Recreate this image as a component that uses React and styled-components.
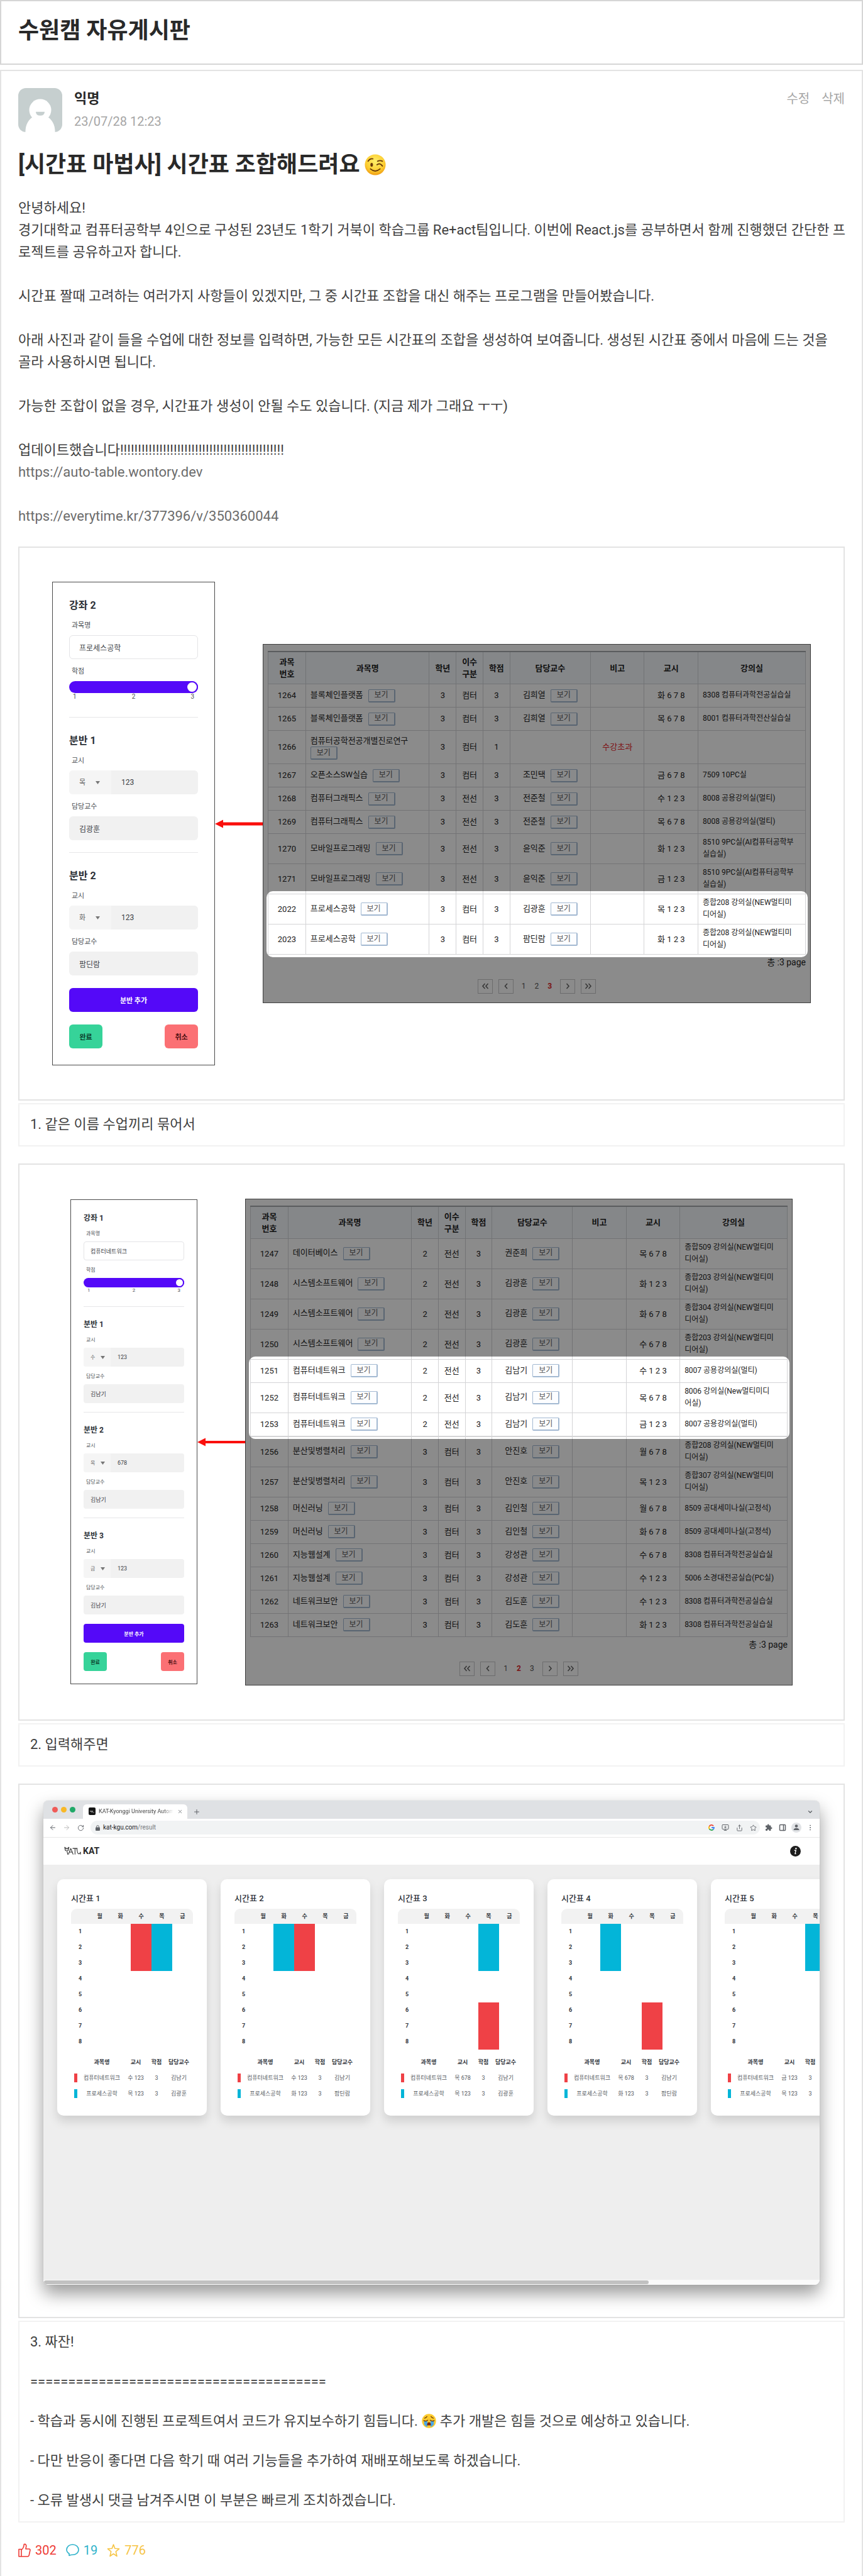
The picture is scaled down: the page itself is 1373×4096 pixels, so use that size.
import React, { useId } from "react";
import styled, { createGlobalStyle, css } from "styled-components";
import {
  ArrowLeft,
  ArrowRight,
  ChevronDown,
  MonitorDown,
  PanelRight,
  Plus,
  RotateCw,
  Share,
  Star,
  X,
  EllipsisVertical,
} from "lucide-react";

const GlobalStyle = createGlobalStyle`
  *, *::before, *::after { box-sizing: border-box; }
  body {
    margin: 0;
    background: #fff;
    color: #292929;
    font-family: Roboto, "Noto Sans CJK KR", sans-serif;
  }
  h1, h2, h3, p, ul { margin: 0; padding: 0; }
  button, input, select { font-family: inherit; }
`;

/* ---------- page ---------- */

const BoardHeader = styled.header`
  border: 2px solid #d6d6d6;
  margin-bottom: 8px;
  padding: 22px 27px 27px;
`;

const BoardTitle = styled.h1`
  font-size: 36px;
  line-height: 50px;
  font-weight: 700;
`;

const Post = styled.article`
  border: 2px solid #e3e3e3;
  border-bottom: 0;
  padding: 26px 27px 25px;
`;

const PostHead = styled.div`
  display: flex;
  align-items: center;
  gap: 19px;
`;

const Byline = styled.div`
  flex: 1;
`;

const Author = styled.h3`
  font-size: 22px;
  line-height: 36px;
  font-weight: 700;
`;

const PostedAt = styled.time`
  display: block;
  font-size: 20px;
  line-height: 36px;
  color: #a6a6a6;
`;

const Actions = styled.div`
  display: flex;
  gap: 19px;
  align-self: flex-start;
`;

const ActionButton = styled.button`
  border: 0;
  padding: 0;
  background: none;
  color: #a6a6a6;
  font-size: 20px;
  line-height: 36px;
`;

const PostTitle = styled.h2`
  display: flex;
  align-items: center;
  gap: 7px;
  margin: 26px 0 26px;
  font-size: 36px;
  line-height: 50px;
  font-weight: 700;
`;

const Body = styled.div`
  margin-right: -8px;
  font-size: 22px;
  line-height: 35px;
  color: #404040;
`;

const Paragraph = styled.p`
  margin-bottom: ${(p) => (p.$last ? 31 : 35)}px;
`;

const BodyLink = styled.a`
  color: #6c6c6c;
  text-decoration: none;
`;

const Figure = styled.figure`
  margin: 0 0 27px;
`;

const Frame = styled.div`
  display: flex;
  align-items: center;
  border: 2px solid #e3e3e3;
  padding: ${(p) => p.$pad};
`;

const Caption = styled.figcaption`
  display: flex;
  flex-direction: column;
  gap: 28px;
  margin-top: 4px;
  border: 2px solid #f2f2f2;
  padding: 14px 17px 16px;
  font-size: 22px;
  line-height: 35px;
  color: #404040;
`;

const CaptionLine = styled.p`
  display: flex;
  align-items: center;
  gap: 6px;
`;

const Stats = styled.ul`
  display: flex;
  gap: 15px;
  list-style: none;
`;

const Stat = styled.li`
  display: flex;
  align-items: center;
  gap: 7px;
  font-size: 20px;
  line-height: 35px;
  color: ${(p) => p.$color};
`;

/* ---------- course form ---------- */

const large = {
  width: 259, padX: 26, padTop: 27, padBottom: 26,
  title: 16, titleLine: 20, titleGap: 2,
  label: 11, labelLine: 16, labelTop: 12, labelBottom: 7,
  field: 38, text: 12, textPad: 16, radius: 6, day: 67,
  slider: 19, tick: 10, tickLine: 12,
  ruleTop: 26, ruleBlock: 19, ruleBottom: 27, gap: 20, action: 53, button: 11,
};

const small = {
  width: 202, padX: 20, padTop: 21, padBottom: 20,
  title: 12, titleLine: 16, titleGap: 1,
  label: 8, labelLine: 12, labelTop: 10, labelBottom: 6,
  field: 30, text: 9, textPad: 11, radius: 4, day: 43,
  slider: 15, tick: 8, tickLine: 10,
  ruleTop: 20, ruleBlock: 14, ruleBottom: 20, gap: 15, action: 37, button: 8,
};

const FormPanel = styled.form`
  flex: 0 0 ${(p) => p.$s.width}px;
  border: 1px solid #4a4a4a;
  padding: ${(p) => p.$s.padTop}px ${(p) => p.$s.padX}px ${(p) => p.$s.padBottom}px;
  color: #2b3037;
`;

const FormTitle = styled.h3`
  margin-bottom: ${(p) => p.$s.titleGap}px;
  font-size: ${(p) => p.$s.title}px;
  line-height: ${(p) => p.$s.titleLine}px;
  font-weight: 700;
`;

const Label = styled.label`
  display: block;
  padding: ${(p) => p.$s.labelTop}px 4px ${(p) => p.$s.labelBottom}px;
  font-size: ${(p) => p.$s.label}px;
  line-height: ${(p) => p.$s.labelLine}px;
  color: #4b4f55;
`;

const fieldStyle = css`
  display: block;
  width: 100%;
  min-width: 0;
  height: ${(p) => p.$s.field}px;
  border: 0;
  border-radius: ${(p) => p.$s.radius}px;
  padding: 0 ${(p) => p.$s.textPad}px;
  background: #f1f1f1;
  color: #3c4046;
  font-size: ${(p) => p.$s.text}px;
`;

const TextField = styled.input`
  ${fieldStyle}
  ${(p) => p.$outlined && css`
    border: 1px solid #e4e4e6;
    background: #fff;
    padding: 0 ${p.$s.textPad - 1}px;
  `}
`;

const FieldGroup = styled.div`
  display: flex;
  border-radius: ${(p) => p.$s.radius}px;
  overflow: hidden;
  background: #f1f1f1;
`;

const DayBox = styled.div`
  display: flex;
  align-items: center;
  flex: 0 0 ${(p) => p.$s.day}px;
  padding-left: ${(p) => p.$s.textPad}px;
  background: #f5f5f5;
  color: #777;
`;

const DaySelect = styled.select`
  appearance: none;
  width: 50%;
  border: 0;
  padding: 0;
  background: transparent;
  color: #666;
  font-size: ${(p) => p.$s.label}px;
`;

const Slider = styled.input`
  appearance: none;
  display: block;
  width: 100%;
  height: ${(p) => p.$s.slider}px;
  margin: 0;
  border-radius: 10px;
  background: #5409f8;

  &::-webkit-slider-thumb {
    appearance: none;
    width: ${(p) => p.$s.slider}px;
    height: ${(p) => p.$s.slider}px;
    border: 2px solid #5409f8;
    border-radius: 50%;
    background: #fff;
  }
`;

const Ticks = styled.div`
  display: flex;
  justify-content: space-between;
  padding: 0 6px;
  font-size: ${(p) => p.$s.tick}px;
  line-height: ${(p) => p.$s.tickLine}px;
  color: #4b4f55;
`;

const Rule = styled.hr`
  height: 1px;
  margin: ${(p) => (p.$afterBlock ? p.$s.ruleBlock : p.$s.ruleTop)}px 0 ${(p) => p.$s.ruleBottom}px;
  border: 0;
  background: #e6e6e8;
`;

const FormButton = styled.button`
  width: ${(p) => (p.$wide ? "100%" : `${p.$s.action}px`)};
  height: ${(p) => p.$s.field}px;
  border: 0;
  border-radius: ${(p) => p.$s.radius}px;
  padding: 0;
  background: ${(p) => p.$bg};
  color: ${(p) => p.$color};
  font-size: ${(p) => p.$s.button}px;
  font-weight: 700;
`;

const ButtonArea = styled.div`
  display: flex;
  flex-wrap: wrap;
  justify-content: space-between;
  gap: ${(p) => p.$s.gap}px 0;
  margin-top: ${(p) => p.$s.gap}px;
`;

function CourseForm({ size, number, course, sections }) {
  const id = useId();
  return (
    <FormPanel $s={size} onSubmit={(e) => e.preventDefault()}>
      <FormTitle $s={size}>강좌 {number}</FormTitle>
      <Label $s={size} htmlFor={`${id}c`}>과목명</Label>
      <TextField $s={size} $outlined id={`${id}c`} defaultValue={course} />
      <Label $s={size} htmlFor={`${id}r`}>학점</Label>
      <Slider $s={size} id={`${id}r`} type="range" min="1" max="3" defaultValue="3" />
      <Ticks $s={size}><span>1</span><span>2</span><span>3</span></Ticks>
      {sections.map(([day, time, professor], i) => (
        <React.Fragment key={i}>
          <Rule $s={size} $afterBlock={i > 0} />
          <FormTitle $s={size}>분반 {i + 1}</FormTitle>
          <Label $s={size} htmlFor={`${id}t${i}`}>교시</Label>
          <FieldGroup $s={size}>
            <DayBox $s={size}>
              <DaySelect $s={size} aria-label="요일" defaultValue={day}>
                {["월", "화", "수", "목", "금"].map((d) => <option key={d}>{d}</option>)}
              </DaySelect>
              <svg width="7" height="5" viewBox="0 0 7 5"><path d="M0 0h7L3.500 5z" fill="currentColor" /></svg>
            </DayBox>
            <TextField $s={size} id={`${id}t${i}`} defaultValue={time} />
          </FieldGroup>
          <Label $s={size} htmlFor={`${id}p${i}`}>담당교수</Label>
          <TextField $s={size} id={`${id}p${i}`} defaultValue={professor} />
        </React.Fragment>
      ))}
      <ButtonArea $s={size}>
        <FormButton $s={size} $wide $bg="#5409f8" $color="#fff" type="button">분반 추가</FormButton>
        <FormButton $s={size} $bg="#36d399" $color="#0b3b29" type="submit">완료</FormButton>
        <FormButton $s={size} $bg="#fb7074" $color="#4a0f12" type="button">취소</FormButton>
      </ButtonArea>
    </FormPanel>
  );
}

/* ---------- arrow ---------- */

const ArrowSvg = styled.svg`
  flex: 0 0 76px;
  display: block;
`;

function RedArrow({ thickness }) {
  return (
    <ArrowSvg width="76" height="14" viewBox="0 0 76 14" aria-hidden="true">
      <path d={`M10 7H76`} stroke="#fa0f0c" strokeWidth={thickness} />
      <path d="M0 7L13 0.500V13.500Z" fill="#fa0f0c" />
    </ArrowSvg>
  );
}

/* ---------- lecture table ---------- */

const ListPanel = styled.div`
  flex: 1;
  min-width: 0;
  overflow: hidden;
  border: 1px solid #3d3d3d;
  padding: 10px 7px 14px;
  background: #fff;
  color: #222;
`;

const LectureTable = styled.table`
  width: 100%;
  table-layout: fixed;
  border-collapse: collapse;
  border-top: 2px solid #a5a9ad;
  font-size: 13px;
  line-height: 19px;
`;

const Head = styled.th`
  width: ${(p) => p.$w}%;
  height: 51px;
  border: 1px solid #d0d3d6;
  padding: 0;
  background: #f4f7fb;
  font-weight: 700;
`;

const Cell = styled.td`
  height: ${(p) => p.$h}px;
  border: 1px solid #d4d4d6;
  padding: 0;
  text-align: ${(p) => (p.$left ? "left" : "center")};
  ${(p) => p.$left && css`padding-left: 7px;`}
  ${(p) => p.$compact && css`font-size: 12px;`}
  ${(p) => p.$alert && css`color: #e8262b;`}
`;

const Rows = styled.tbody`
  ${(p) => p.$spotlight && css`
    position: relative;

    &::after {
      content: "";
      position: absolute;
      inset: -4px -3px;
      border-radius: 10px;
      box-shadow: 0 0 0 1000px rgba(0, 0, 0, 0.455);
      pointer-events: none;
    }
  `}
`;

const ViewButton = styled.button`
  width: 43px;
  height: 21px;
  margin-left: ${(p) => (p.$flush ? 0 : 8)}px;
  border: 1px solid #a3b9d2;
  border-width: 1px 2px 2px 1px;
  border-radius: 2px;
  padding: 0;
  background: #fcfdff;
  color: #555;
  font-size: 12px;
  line-height: 17px;
`;

const Total = styled.p`
  margin-top: 2px;
  text-align: right;
  font-size: 14px;
  line-height: 20px;
`;

const Pager = styled.nav`
  display: flex;
  justify-content: center;
  align-items: center;
  gap: 9px;
  margin-top: 17px;
`;

const PageNumbers = styled.div`
  display: flex;
  gap: 14px;
  padding: 0 4px;
`;

const PageLink = styled.a`
  color: ${(p) => (p.$current ? "#e0262b" : "#555")};
  font-size: 12px;
  line-height: 23px;
  font-weight: ${(p) => (p.$current ? 700 : 400)};
  text-decoration: none;
`;

const PageButton = styled.button`
  width: 24px;
  height: 23px;
  border: 1px solid #c6c6c8;
  padding: 0;
  background: transparent;
  color: #666;
  display: grid;
  place-items: center;
`;

const columns = [
  ["과목\n번호", 7], ["과목명", 23], ["학년", 5], ["이수\n구분", 5], ["학점", 5],
  ["담당교수", 15], ["비고", 10], ["교시", 10], ["강의실", 20],
];

const PreLine = styled.span`
  white-space: pre-line;
`;

function PageIcon({ d }) {
  return (
    <svg width="12" height="10" viewBox="0 0 12 10" fill="none" stroke="currentColor" strokeWidth="1.600">
      <path d={d} />
    </svg>
  );
}

function LectureRow({ row }) {
  const [code, name, year, kind, credit, professor, note, time, room] = row;
  const longName = name.length > 11;
  const h = longName ? 53 : room.includes("\n") ? 48 : 37;
  return (
    <tr>
      <Cell $h={h}>{code}</Cell>
      <Cell $left>
        {name}
        {longName && <br />}
        <ViewButton $flush={longName} type="button">보기</ViewButton>
      </Cell>
      <Cell>{year}</Cell>
      <Cell>{kind}</Cell>
      <Cell>{credit}</Cell>
      <Cell>{professor && <>{professor}<ViewButton type="button">보기</ViewButton></>}</Cell>
      <Cell $alert>{note}</Cell>
      <Cell>{time}</Cell>
      <Cell $left $compact><PreLine>{room}</PreLine></Cell>
    </tr>
  );
}

function LectureList({ before, picked, after = [], page }) {
  return (
    <ListPanel>
      <LectureTable>
        <thead>
          <tr>{columns.map(([t, w]) => <Head key={t} $w={w}><PreLine>{t}</PreLine></Head>)}</tr>
        </thead>
        <Rows>{before.map((r) => <LectureRow key={r[0]} row={r} />)}</Rows>
        <Rows $spotlight>{picked.map((r) => <LectureRow key={r[0]} row={r} />)}</Rows>
        <Rows>{after.map((r) => <LectureRow key={r[0]} row={r} />)}</Rows>
      </LectureTable>
      <Total>총 :3 page</Total>
      <Pager aria-label="페이지">
        <PageButton type="button" aria-label="처음"><PageIcon d="M5.500 1L2 5l3.500 4M10.500 1L7 5l3.500 4" /></PageButton>
        <PageButton type="button" aria-label="이전"><PageIcon d="M8 1L4.500 5L8 9" /></PageButton>
        <PageNumbers>
          {[1, 2, 3].map((n) => <PageLink key={n} href="#" $current={n === page}>{n}</PageLink>)}
        </PageNumbers>
        <PageButton type="button" aria-label="다음"><PageIcon d="M4.500 1L8 5l-3.500 4" /></PageButton>
        <PageButton type="button" aria-label="마지막"><PageIcon d="M1.500 1L5 5l-3.500 4M6.500 1L10 5l-3.500 4" /></PageButton>
      </Pager>
    </ListPanel>
  );
}

const multi = (n) => `종합${n} 강의실(NEW멀티미\n디어실)`;

const listOne = {
  before: [
    ["1264", "블록체인플랫폼", 3, "컴터", 3, "김희열", "", "화 6 7 8", "8308 컴퓨터과학전공실습실"],
    ["1265", "블록체인플랫폼", 3, "컴터", 3, "김희열", "", "목 6 7 8", "8001 컴퓨터과학전산실습실"],
    ["1266", "컴퓨터공학전공개별진로연구", 3, "컴터", 1, "", "수강초과", "", ""],
    ["1267", "오픈소스SW실습", 3, "컴터", 3, "조민택", "", "금 6 7 8", "7509 10PC실"],
    ["1268", "컴퓨터그래픽스", 3, "전선", 3, "전준철", "", "수 1 2 3", "8008 공용강의실(멀티)"],
    ["1269", "컴퓨터그래픽스", 3, "전선", 3, "전준철", "", "목 6 7 8", "8008 공용강의실(멀티)"],
    ["1270", "모바일프로그래밍", 3, "전선", 3, "윤익준", "", "화 1 2 3", "8510 9PC실(AI컴퓨터공학부\n실습실)"],
    ["1271", "모바일프로그래밍", 3, "전선", 3, "윤익준", "", "금 1 2 3", "8510 9PC실(AI컴퓨터공학부\n실습실)"],
  ],
  picked: [
    ["2022", "프로세스공학", 3, "컴터", 3, "김광훈", "", "목 1 2 3", multi(208)],
    ["2023", "프로세스공학", 3, "컴터", 3, "팜딘람", "", "화 1 2 3", multi(208)],
  ],
};

const listTwo = {
  before: [
    ["1247", "데이터베이스", 2, "전선", 3, "권준희", "", "목 6 7 8", multi(509)],
    ["1248", "시스템소프트웨어", 2, "전선", 3, "김광훈", "", "화 1 2 3", multi(203)],
    ["1249", "시스템소프트웨어", 2, "전선", 3, "김광훈", "", "화 6 7 8", multi(304)],
    ["1250", "시스템소프트웨어", 2, "전선", 3, "김광훈", "", "수 6 7 8", multi(203)],
  ],
  picked: [
    ["1251", "컴퓨터네트워크", 2, "전선", 3, "김남기", "", "수 1 2 3", "8007 공용강의실(멀티)"],
    ["1252", "컴퓨터네트워크", 2, "전선", 3, "김남기", "", "목 6 7 8", "8006 강의실(New멀티미디\n어실)"],
    ["1253", "컴퓨터네트워크", 2, "전선", 3, "김남기", "", "금 1 2 3", "8007 공용강의실(멀티)"],
  ],
  after: [
    ["1256", "분산및병렬처리", 3, "컴터", 3, "안진호", "", "월 6 7 8", multi(208)],
    ["1257", "분산및병렬처리", 3, "컴터", 3, "안진호", "", "목 1 2 3", multi(307)],
    ["1258", "머신러닝", 3, "컴터", 3, "김인철", "", "월 6 7 8", "8509 공대세미나실(고정석)"],
    ["1259", "머신러닝", 3, "컴터", 3, "김인철", "", "화 6 7 8", "8509 공대세미나실(고정석)"],
    ["1260", "지능웹설계", 3, "컴터", 3, "강성관", "", "수 6 7 8", "8308 컴퓨터과학전공실습실"],
    ["1261", "지능웹설계", 3, "컴터", 3, "강성관", "", "수 1 2 3", "5006 소경대전공실습(PC실)"],
    ["1262", "네트워크보안", 3, "컴터", 3, "김도훈", "", "수 1 2 3", "8308 컴퓨터과학전공실습실"],
    ["1263", "네트워크보안", 3, "컴터", 3, "김도훈", "", "화 1 2 3", "8308 컴퓨터과학전공실습실"],
  ],
};

/* ---------- browser window ---------- */

const BrowserWindow = styled.div`
  flex: 1;
  min-width: 0;
  overflow: hidden;
  border-radius: 8px;
  background: #fff;
  box-shadow: 0 0 1px rgba(0, 0, 0, 0.3), 0 14px 28px rgba(0, 0, 0, 0.4);
`;

const TabStrip = styled.div`
  display: flex;
  align-items: flex-end;
  height: 29px;
  padding: 0 10px 0 14px;
  background: #dfe1e4;
  color: #444;
`;

const Lights = styled.div`
  display: flex;
  align-items: center;
  gap: 5px;
  height: 29px;
  width: 49px;
`;

const Light = styled.span`
  width: 9px;
  height: 9px;
  border-radius: 50%;
  background: ${(p) => p.$color};
`;

const Tab = styled.div`
  display: flex;
  align-items: center;
  gap: 5px;
  width: 166px;
  height: 23px;
  margin-right: 9px;
  border-radius: 6px 6px 0 0;
  padding: 0 7px 0 9px;
  background: #fff;
`;

const TabTitle = styled.span`
  flex: 1;
  overflow: hidden;
  white-space: nowrap;
  font-size: 9px;
  line-height: 12px;
  mask-image: linear-gradient(90deg, #000 85%, transparent);
`;

const IconButton = styled.button`
  display: grid;
  place-items: center;
  width: ${(p) => p.$w || 22}px;
  height: 22px;
  flex: none;
  border: 0;
  padding: 0;
  background: none;
  color: ${(p) => p.$color || "#5f6368"};
`;

const StripSpacer = styled.div`
  flex: 1;
`;

const Toolbar = styled.div`
  display: flex;
  align-items: center;
  height: 30px;
  padding: 0 4px;
  border-bottom: 1px solid #e8e8e8;
`;

const AddressBar = styled.div`
  display: flex;
  align-items: center;
  flex: 1;
  height: 22px;
  margin: 0 3px 0 5px;
  border-radius: 11px;
  padding-left: 8px;
  background: #f1f3f4;
`;

const Address = styled.span`
  flex: 1;
  padding-left: 5px;
  font-size: 10px;
  line-height: 14px;
  color: #202124;
`;

const AddressPath = styled.span`
  color: #777b80;
`;

const SiteHeader = styled.div`
  display: flex;
  align-items: center;
  justify-content: space-between;
  height: 43px;
  padding: 0 30px 0 33px;
`;

const Brand = styled.a`
  display: flex;
  align-items: center;
  gap: 3px;
  color: #2a2a2a;
  font-size: 14px;
  line-height: 20px;
  font-weight: 700;
  text-decoration: none;
`;

const Cards = styled.div`
  display: flex;
  gap: 22px;
  overflow: hidden;
  padding: 23px 22px 261px;
  background: #eee;
`;

const Card = styled.section`
  flex: 0 0 238px;
  border-radius: 10px;
  padding: 22px;
  background: #fff;
  box-shadow: 0 9px 16px rgba(0, 0, 0, 0.13);
`;

const CardTitle = styled.h3`
  margin-bottom: 7px;
  color: #2b3037;
  font-size: 13px;
  line-height: 18px;
  font-weight: 500;
`;

const Grid = styled.table`
  width: 100%;
  table-layout: fixed;
  border-collapse: separate;
  border-spacing: 0;
  margin-bottom: ${(p) => p.$gap || 0}px;
  color: #33373d;
  font-size: 9px;
  line-height: 12px;
  text-align: center;
`;

const DayHead = styled.th`
  width: ${(p) => (p.$first ? 15 : 17)}%;
  height: 24px;
  padding: 0;
  background: #f2f2f2;
  font-weight: 700;

  &:first-child { border-top-left-radius: 9px; }
  &:last-child { border-top-right-radius: 9px; }
`;

const HourHead = styled.th`
  height: 25px;
  padding: 0;
  font-weight: 700;
`;

const Slot = styled.td`
  padding: 0;
  background: ${(p) => p.$color || "transparent"};
`;

const InfoHead = styled.th`
  width: ${(p) => p.$w}px;
  height: 25px;
  padding: 0;
  white-space: nowrap;
  font-weight: 700;
`;

const InfoCell = styled.td`
  height: 25px;
  padding: 0;
  white-space: nowrap;
  color: #54585e;
`;

const Swatch = styled.span`
  display: block;
  width: 5px;
  height: 14px;
  margin-left: 5px;
  background: ${(p) => p.$color};
`;

const ScrollTrack = styled.div`
  height: 8px;
  padding: 1px;
  background: #fafafa;
`;

const ScrollThumb = styled.div`
  width: 78%;
  height: 6px;
  border-radius: 3px;
  background: #c1c1c1;
`;

const RED = "#ef4146";
const BLUE = "#03b5d8";
const DAYS = ["월", "화", "수", "목", "금"];

const timetables = [
  [["수", 1], ["목", 1], "김광훈"],
  [["수", 1], ["화", 1], "팜딘람"],
  [["목", 6], ["목", 1], "김광훈"],
  [["목", 6], ["화", 1], "팜딘람"],
  [["금", 1], ["목", 1], "김광훈"],
];

function Timetable({ number, data }) {
  const [network, process, professor] = data;
  const colorAt = (day, hour) => {
    const hit = ([d, start]) => d === day && hour >= start && hour < start + 3;
    if (hit(network)) return RED;
    if (hit(process)) return BLUE;
    return undefined;
  };
  const span = ([d, start]) => `${d} ${start}${start + 1}${start + 2}`;
  return (
    <Card>
      <CardTitle>시간표 {number}</CardTitle>
      <Grid $gap={8}>
        <thead>
          <tr>
            <DayHead $first aria-label="교시" />
            {DAYS.map((d) => <DayHead key={d}>{d}</DayHead>)}
          </tr>
        </thead>
        <tbody>
          {[1, 2, 3, 4, 5, 6, 7, 8].map((h) => (
            <tr key={h}>
              <HourHead>{h}</HourHead>
              {DAYS.map((d) => <Slot key={d} $color={colorAt(d, h)} />)}
            </tr>
          ))}
        </tbody>
      </Grid>
      <Grid>
        <thead>
          <tr>
            <InfoHead $w={15} aria-label="색" />
            <InfoHead $w={68}>과목명</InfoHead>
            <InfoHead $w={40}>교시</InfoHead>
            <InfoHead $w={26}>학점</InfoHead>
            <InfoHead $w={45}>담당교수</InfoHead>
          </tr>
        </thead>
        <tbody>
          <tr>
            <InfoCell><Swatch $color={RED} /></InfoCell>
            <InfoCell>컴퓨터네트워크</InfoCell>
            <InfoCell>{span(network)}</InfoCell>
            <InfoCell>3</InfoCell>
            <InfoCell>김남기</InfoCell>
          </tr>
          <tr>
            <InfoCell><Swatch $color={BLUE} /></InfoCell>
            <InfoCell>프로세스공학</InfoCell>
            <InfoCell>{span(process)}</InfoCell>
            <InfoCell>3</InfoCell>
            <InfoCell>{professor}</InfoCell>
          </tr>
        </tbody>
      </Grid>
    </Card>
  );
}

function CatDoodle(props) {
  return (
    <svg viewBox="0 0 28 14" fill="none" stroke="currentColor" strokeWidth="1.100" strokeLinejoin="round" {...props}>
      <path d="M1 1l1 5q2 2 5 0L8 1 6 3H3zM3 4.500h.6M5.500 4.500h.6M5 8l1 5" />
      <path d="M7 13L11 3l4 10M9 9h5M14 3h8M18 3v10M21 3q1 9 3 9t3-3v4" />
    </svg>
  );
}

function Browser() {
  return (
    <BrowserWindow>
      <TabStrip>
        <Lights>
          <Light $color="#f05b58" /><Light $color="#f8b827" /><Light $color="#20a968" />
        </Lights>
        <Tab>
          <svg width="11" height="12" viewBox="0 0 11 12">
            <rect width="11" height="12" rx="2" fill="#151515" />
            <path d="M2 5l1 2 1-2 1 3 1-3 1 3h2" fill="none" stroke="#ccc" strokeWidth=".6" />
          </svg>
          <TabTitle>KAT-Kyonggi University Autom</TabTitle>
          <IconButton $w={10} type="button" aria-label="탭 닫기"><X size={9} /></IconButton>
        </Tab>
        <IconButton $w={10} type="button" aria-label="새 탭"><Plus size={12} /></IconButton>
        <StripSpacer />
        <IconButton $w={10} type="button" aria-label="탭 검색"><ChevronDown size={10} strokeWidth={3} /></IconButton>
      </TabStrip>
      <Toolbar>
        <IconButton type="button" aria-label="뒤로"><ArrowLeft size={12} /></IconButton>
        <IconButton type="button" aria-label="앞으로" $color="#bbb"><ArrowRight size={12} /></IconButton>
        <IconButton type="button" aria-label="새로고침"><RotateCw size={11} /></IconButton>
        <AddressBar>
          <svg width="7" height="9" viewBox="0 0 7 9">
            <rect y="3.500" width="7" height="5.500" rx="1" fill="#5f6368" />
            <path d="M1.700 4V2.400a1.800 1.800 0 0 1 3.600 0V4" fill="none" stroke="#5f6368" />
          </svg>
          <Address>kat-kgu.com<AddressPath>/result</AddressPath></Address>
          <IconButton type="button" aria-label="Google">
            <svg width="10" height="10" viewBox="0 0 10 10" fill="none" strokeWidth="1.800">
              <path d="M8 2.300A4 4 0 0 0 1.500 3" stroke="#ea4335" />
              <path d="M1.500 3a4 4 0 0 0 0 4" stroke="#fbbc05" />
              <path d="M1.500 7A4 4 0 0 0 7.600 8" stroke="#34a853" />
              <path d="M7.600 8A4 4 0 0 0 9 5H5" stroke="#4285f4" />
            </svg>
          </IconButton>
          <IconButton type="button" aria-label="설치"><MonitorDown size={12} /></IconButton>
          <IconButton type="button" aria-label="공유"><Share size={11} /></IconButton>
          <IconButton type="button" aria-label="북마크"><Star size={11} /></IconButton>
        </AddressBar>
        <IconButton type="button" aria-label="확장 프로그램">
          <svg width="12" height="12" viewBox="0 0 24 24" fill="currentColor">
            <path d="M20.500 11H19V7a2 2 0 0 0-2-2h-4V3.500a2.500 2.500 0 0 0-5 0V5H4a2 2 0 0 0-2 2v3.800h1.500a2.700 2.700 0 0 1 0 5.400H2V20a2 2 0 0 0 2 2h3.800v-1.500a2.700 2.700 0 0 1 5.400 0V22H17a2 2 0 0 0 2-2v-4h1.500a2.500 2.500 0 0 0 0-5z" />
          </svg>
        </IconButton>
        <IconButton type="button" aria-label="사이드 패널"><PanelRight size={12} strokeWidth={3} /></IconButton>
        <IconButton type="button" aria-label="프로필">
          <svg width="16" height="16" viewBox="0 0 16 16">
            <circle cx="8" cy="8" r="8" fill="#e1e3e6" />
            <circle cx="8" cy="5.500" r="2.300" fill="#5f6368" />
            <path d="M3.500 12c0-4.500 9-4.500 9 0z" fill="#5f6368" />
          </svg>
        </IconButton>
        <IconButton type="button" aria-label="메뉴"><EllipsisVertical size={12} /></IconButton>
      </Toolbar>
      <SiteHeader>
        <Brand href="#"><CatDoodle width="27" height="14" />KAT</Brand>
        <IconButton $w={17} type="button" aria-label="정보">
          <svg width="17" height="17" viewBox="0 0 17 17">
            <circle cx="8.500" cy="8.500" r="8.500" fill="#1d1d1d" />
            <circle cx="9.400" cy="4.300" r="1.200" fill="#fff" />
            <path d="M6.800 7.200h2.400L8 12.600h1.600" fill="none" stroke="#fff" strokeWidth="1.400" />
          </svg>
        </IconButton>
      </SiteHeader>
      <Cards>
        {timetables.map((t, i) => <Timetable key={i} number={i + 1} data={t} />)}
      </Cards>
      <ScrollTrack><ScrollThumb /></ScrollTrack>
    </BrowserWindow>
  );
}

/* ---------- drawings ---------- */

function Avatar() {
  return (
    <svg width="70" height="70" viewBox="0 0 80 80" aria-hidden="true">
      <defs><clipPath id="avatarClip"><rect width="80" height="80" rx="14" /></clipPath></defs>
      <g clipPath="url(#avatarClip)">
        <rect width="80" height="80" fill="#c6cfcf" />
        <path d="M13 80C13 66 19 56 29 51h22c10 5 16 15 16 29z" fill="#fff" />
        <ellipse cx="40" cy="40" rx="20" ry="20" fill="#fff" />
        <path d="M32 43h16q0 7-8 7t-8-7z" fill="#c6cfcf" />
      </g>
    </svg>
  );
}

function WinkFace() {
  return (
    <svg width="34" height="34" viewBox="0 0 36 36" role="img" aria-label="윙크">
      <defs>
        <radialGradient id="wink" cx=".5" cy=".35" r=".65">
          <stop offset="0" stopColor="#fff06a" /><stop offset=".7" stopColor="#fccb2f" /><stop offset="1" stopColor="#ef9b12" />
        </radialGradient>
      </defs>
      <circle cx="18" cy="18" r="17.500" fill="url(#wink)" />
      <ellipse cx="12" cy="18" rx="2.200" ry="3.300" fill="#6b3a08" />
      <path d="M6 12q3-5 8-4M21 18q5-4 9 2M22 12q4-2 8 0M10 25q8 7 16 0" fill="none" stroke="#6b3a08" strokeWidth="2" strokeLinecap="round" />
    </svg>
  );
}

function CryFace() {
  return (
    <svg width="23" height="23" viewBox="0 0 36 36" role="img" aria-label="울음">
      <circle cx="18" cy="18" r="17.500" fill="#fccb2f" />
      <path d="M6 18h8v15q-4-1-8-6zM22 18h8v9q-4 5-8 6z" fill="#4aa8e8" />
      <path d="M5 17q5 3 10-1M31 17q-5 3-10-1M7 11q4-1 6-4M29 11q-4-1-6-4" fill="none" stroke="#6b3a08" strokeWidth="2" strokeLinecap="round" />
      <path d="M13 29q0-8 5-8t5 8z" fill="#7a2c12" />
    </svg>
  );
}

function ThumbIcon() {
  return (
    <svg width="20" height="22" viewBox="0 0 20 22" fill="none" stroke="currentColor" strokeWidth="1.600" strokeLinejoin="round">
      <path d="M1 9.500h4V21H1zM5 10.500C8.500 8 9 5 9.300 1.500c2.700-.8 4 1.500 3.200 4.500L12 9h5.500q1.800.4 1.400 2.200L17.200 19q-.5 2-2.200 2H5z" />
    </svg>
  );
}

function BubbleIcon() {
  return (
    <svg width="21" height="20" viewBox="0 0 21 20" fill="none" stroke="currentColor" strokeWidth="1.600" strokeLinejoin="round">
      <path d="M5 18.500c-.3-1 .1-2 .1-3C2.500 14 1 12 1 9.300 1 4.500 5 1 10.500 1S20 4.500 20 9.300s-4.300 8-9.500 8Q7.500 17.300 5 18.500z" />
    </svg>
  );
}

function StarIcon() {
  return (
    <svg width="21" height="21" viewBox="0 0 21 21" fill="none" stroke="currentColor" strokeWidth="1.600" strokeLinejoin="round">
      <path d="M10.500 1l2.300 6.300 6.700.5-5.200 4.300 1.700 7.400-5.500-3.800L5 19.500l1.700-7.400L1.500 7.800l6.700-.5z" />
    </svg>
  );
}

export default function App() {
  return (
    <>
      <GlobalStyle />
      <BoardHeader><BoardTitle>수원캠 자유게시판</BoardTitle></BoardHeader>
      <Post>
        <PostHead>
          <Avatar />
          <Byline>
            <Author>익명</Author>
            <PostedAt>23/07/28 12:23</PostedAt>
          </Byline>
          <Actions>
            <ActionButton type="button">수정</ActionButton>
            <ActionButton type="button">삭제</ActionButton>
          </Actions>
        </PostHead>
        <PostTitle>[시간표 마법사] 시간표 조합해드려요 <WinkFace /></PostTitle>
        <Body>
          <Paragraph>
            안녕하세요!<br />
            경기대학교 컴퓨터공학부 4인으로 구성된 23년도 1학기 거북이 학습그룹 Re+act팀입니다. 이번에 React.js를 공부하면서 함께 진행했던 간단한 프로젝트를 공유하고자 합니다.
          </Paragraph>
          <Paragraph>시간표 짤때 고려하는 여러가지 사항들이 있겠지만, 그 중 시간표 조합을 대신 해주는 프로그램을 만들어봤습니다.</Paragraph>
          <Paragraph>아래 사진과 같이 들을 수업에 대한 정보를 입력하면, 가능한 모든 시간표의 조합을 생성하여 보여줍니다. 생성된 시간표 중에서 마음에 드는 것을<br />골라 사용하시면 됩니다.</Paragraph>
          <Paragraph>가능한 조합이 없을 경우, 시간표가 생성이 안될 수도 있습니다. (지금 제가 그래요 ㅜㅜ)</Paragraph>
          <Paragraph>
            업데이트했습니다!!!!!!!!!!!!!!!!!!!!!!!!!!!!!!!!!!!!!!!!!!!!!!<br />
            <BodyLink href="#">https://auto-table.wontory.dev</BodyLink>
          </Paragraph>
          <Paragraph $last><BodyLink href="#">https://everytime.kr/377396/v/350360044</BodyLink></Paragraph>
        </Body>

        <Figure>
          <Frame $pad="54px 52px">
            <CourseForm size={large} number={2} course="프로세스공학" sections={[["목", "123", "김광훈"], ["화", "123", "팜딘람"]]} />
            <RedArrow thickness={5} />
            <LectureList {...listOne} page={3} />
          </Frame>
          <Caption><CaptionLine>1. 같은 이름 수업끼리 묶어서</CaptionLine></Caption>
        </Figure>

        <Figure>
          <Frame $pad="54px 81px">
            <CourseForm size={small} number={1} course="컴퓨터네트워크" sections={[["수", "123", "김남기"], ["목", "678", "김남기"], ["금", "123", "김남기"]]} />
            <RedArrow thickness={4} />
            <LectureList {...listTwo} page={2} />
          </Frame>
          <Caption><CaptionLine>2. 입력해주면</CaptionLine></Caption>
        </Figure>

        <Figure>
          <Frame $pad="25px 38px 51px"><Browser /></Frame>
          <Caption>
            <CaptionLine>3. 짜잔!</CaptionLine>
            <CaptionLine>=======================================</CaptionLine>
            <CaptionLine>- 학습과 동시에 진행된 프로젝트여서 코드가 유지보수하기 힘듭니다. <CryFace /> 추가 개발은 힘들 것으로 예상하고 있습니다.</CaptionLine>
            <CaptionLine>- 다만 반응이 좋다면 다음 학기 때 여러 기능들을 추가하여 재배포해보도록 하겠습니다.</CaptionLine>
            <CaptionLine>- 오류 발생시 댓글 남겨주시면 이 부분은 빠르게 조치하겠습니다.</CaptionLine>
          </Caption>
        </Figure>

        <Stats>
          <Stat $color="#ee3a35"><ThumbIcon />302</Stat>
          <Stat $color="#2fb3cb"><BubbleIcon />19</Stat>
          <Stat $color="#f6c444"><StarIcon />776</Stat>
        </Stats>
      </Post>
    </>
  );
}
